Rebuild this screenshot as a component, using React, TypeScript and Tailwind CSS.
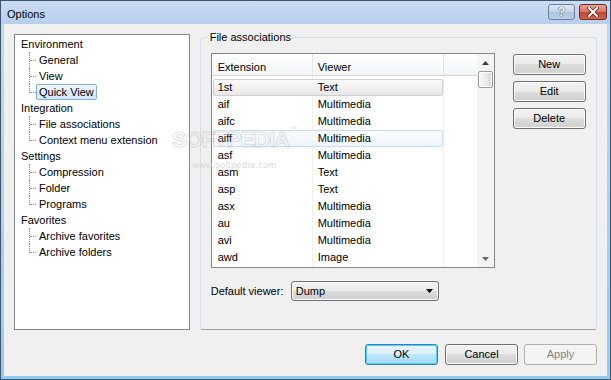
import React from "react";

const tree = [
  { label: "Environment", children: ["General", "View", "Quick View"] },
  { label: "Integration", children: ["File associations", "Context menu extension"] },
  { label: "Settings", children: ["Compression", "Folder", "Programs"] },
  { label: "Favorites", children: ["Archive favorites", "Archive folders"] },
];

const files: [string, string][] = [
  ["1st", "Text"],
  ["aif", "Multimedia"],
  ["aifc", "Multimedia"],
  ["aiff", "Multimedia"],
  ["asf", "Multimedia"],
  ["asm", "Text"],
  ["asp", "Text"],
  ["asx", "Multimedia"],
  ["au", "Multimedia"],
  ["avi", "Multimedia"],
  ["awd", "Image"],
];

function Button({
  children,
  variant = "normal",
  className = "",
}: {
  children: React.ReactNode;
  variant?: "normal" | "default" | "disabled";
  className?: string;
}) {
  const look =
    variant === "default"
      ? "border-[#3c7fb1] bg-[linear-gradient(to_bottom,#eaf6fd_0%,#d9f0fc_50%,#bee6fd_50%,#a7d9f5_100%)] shadow-[inset_0_0_0_1px_#48d0f8]"
      : variant === "disabled"
        ? "border-[#adb2b5] bg-[#f4f4f4] text-[#838383]"
        : "border-[#707070] bg-[linear-gradient(to_bottom,#f2f2f2_0%,#ebebeb_50%,#dddddd_50%,#cfcfcf_100%)] shadow-[inset_0_0_0_1px_#fbfbfb]";
  return (
    <div
      className={`flex h-[21px] w-[73px] items-center justify-center rounded-[3px] border leading-[13px] ${look} ${className}`}
    >
      {children}
    </div>
  );
}

function TitleBar() {
  return (
    <div className="flex h-[23px] items-start bg-gradient-to-b from-[#cadcf2] to-[#b7cfec] pl-[6px] pr-[3px]">
      <span className="mt-[7px] text-[11px] leading-[13px] text-black">Options</span>
      <div className="ml-auto mt-[3px] flex gap-[4px]">
        <div className="flex h-[16px] w-[27px] items-center justify-center rounded-[3px] border border-[#6d7f98] bg-[linear-gradient(to_bottom,#dce7f5_0%,#c3d4ea_50%,#aec3df_50%,#bccfe8_100%)]">
          <span className="text-[12px] font-bold leading-[12px] text-white [text-shadow:0_0_1px_#2d3a4d,0_0_1px_#2d3a4d]">?</span>
        </div>
        <div className="flex h-[16px] w-[28px] items-center justify-center rounded-[3px] border border-[#6b2a24] bg-[linear-gradient(to_bottom,#e8a393_0%,#d47561_50%,#c0432e_50%,#d0654d_100%)]">
          <svg width="12" height="10" viewBox="0 0 12 10">
            <path d="M2 1 L10 9 M10 1 L2 9" stroke="#4a1c17" strokeWidth="3.4" strokeLinecap="square" />
            <path d="M2 1 L10 9 M10 1 L2 9" stroke="#ffffff" strokeWidth="2" strokeLinecap="square" />
          </svg>
        </div>
      </div>
    </div>
  );
}

function Tree() {
  return (
    <div className="h-[296px] w-[176px] border border-[#828790] bg-white pt-[1px]">
      {tree.map((group) => (
        <div key={group.label}>
          <div className="flex h-[16px] items-center pl-[6px] leading-[13px]">{group.label}</div>
          {group.children.map((child, i) => {
            const last = i === group.children.length - 1;
            const selected = child === "Quick View";
            return (
              <div key={child} className="flex h-[16px] items-center pl-[14px]">
                <div className="relative h-full w-[7px]">
                  <div
                    className={
                      last
                        ? "absolute left-0 top-0 h-[9px] border-l border-dotted border-[#8c8c8c]"
                        : "absolute left-0 top-0 h-full border-l border-dotted border-[#8c8c8c]"
                    }
                  />
                  <div className="absolute left-[1px] top-[8px] w-[6px] border-t border-dotted border-[#8c8c8c]" />
                </div>
                <span
                  className={
                    selected
                      ? "flex h-[16px] items-center rounded-[2px] border border-[#84acdd] bg-gradient-to-b from-[#eef6fe] to-[#d4e6fb] px-[2px] leading-[13px]"
                      : "flex h-[16px] items-center border border-transparent px-[2px] leading-[13px]"
                  }
                >
                  {child}
                </span>
              </div>
            );
          })}
        </div>
      ))}
    </div>
  );
}

function ScrollBar() {
  return (
    <div className="flex w-[17px] flex-col bg-[#f4f4f4]">
      <div className="flex h-[17px] items-center justify-center">
        <svg width="7" height="4" viewBox="0 0 7 4">
          <path d="M3.5 0 L7 4 L0 4 Z" fill="#3c3c3c" />
        </svg>
      </div>
      <div className="mx-[1px] h-[17px] rounded-[2px] border border-[#9b9b9b] bg-gradient-to-r from-[#f7f7f7] via-[#ececec] to-[#d6d6d6] shadow-[inset_0_0_0_1px_#ffffff]" />
      <div className="flex-1" />
      <div className="flex h-[17px] items-center justify-center">
        <svg width="7" height="4" viewBox="0 0 7 4">
          <path d="M0 0 L7 0 L3.5 4 Z" fill="#6a6a6a" />
        </svg>
      </div>
    </div>
  );
}

function ListView() {
  return (
    <div className="flex h-[215px] w-[284px] border border-[#828790] bg-white">
      <div className="flex flex-1 flex-col">
        <div className="flex h-[22px] border-b border-[#d5d5d5] bg-gradient-to-b from-white to-[#f4f5f7]">
          <div className="w-[101px] border-r border-[#e2e5e9] pl-[6px] pt-[7px] leading-[13px]">Extension</div>
          <div className="w-[131px] border-r border-[#e2e5e9] pl-[5px] pt-[7px] leading-[13px]">Viewer</div>
          <div className="flex-1" />
        </div>
        <div className="relative flex-1 pt-[3px]">
          <div className="absolute bottom-0 left-[100px] top-0 border-l border-[#f0f0f0]" />
          <div className="absolute bottom-0 left-[231px] top-0 border-l border-[#f0f0f0]" />
          {files.map(([ext, viewer]) => {
            const look =
              ext === "1st"
                ? "border-[#d0d0d0] bg-gradient-to-b from-[#fafafa] to-[#e8e8e8]"
                : ext === "aiff"
                  ? "border-[#c6def9] bg-gradient-to-b from-[#fbfcfe] to-[#eef5fd]"
                  : "border-transparent";
            return (
              <div
                key={ext}
                className={`relative ml-[1px] flex h-[17px] w-[230px] items-center rounded-[2px] border leading-[13px] ${look}`}
              >
                <div className="w-[99px] pl-[4px]">{ext}</div>
                <div className="pl-[5px]">{viewer}</div>
              </div>
            );
          })}
        </div>
      </div>
      <ScrollBar />
    </div>
  );
}

function GroupBox() {
  return (
    <div className="relative ml-[10px] mt-[3px] h-[293px] w-[398px] rounded-[3px] border border-[#d5dfe5] border-b-[#a0a0a0]">
      <span className="absolute -top-[7px] left-[7px] bg-[#f0f0f0] px-[2px] leading-[13px]">File associations</span>
      <div className="flex">
        <div className="ml-[10px] mt-[15px] flex flex-col">
          <ListView />
          <div className="mt-[13px] flex items-center">
            <span className="w-[80px] leading-[13px]">Default viewer:</span>
            <div className="flex h-[20px] w-[148px] items-center rounded-[3px] border border-[#707070] bg-[linear-gradient(to_bottom,#f2f2f2_0%,#ebebeb_50%,#dddddd_50%,#cfcfcf_100%)] pl-[4px] pr-[5px] shadow-[inset_0_0_0_1px_#fbfbfb]">
              <span className="leading-[13px]">Dump</span>
              <svg className="ml-auto" width="7" height="4" viewBox="0 0 7 4">
                <path d="M0 0 L7 0 L3.5 4 Z" fill="#000000" />
              </svg>
            </div>
          </div>
        </div>
        <div className="ml-[18px] mt-[16px] flex flex-col gap-[6px]">
          <Button>New</Button>
          <Button>Edit</Button>
          <Button>Delete</Button>
        </div>
      </div>
    </div>
  );
}

export default function App() {
  return (
    <div className="relative h-[380px] w-[611px] border border-[#3d556f] bg-gradient-to-b from-[#c6d9f1] to-[#8fcdef] font-['Liberation_Sans',Arial,sans-serif] text-[11px] text-black">
      <TitleBar />
      <div className="mx-[3px] flex h-[352px] w-[603px] flex-col bg-[#f0f0f0]">
        <div className="flex px-[10px] pt-[10px]">
          <Tree />
          <GroupBox />
        </div>
        <div className="mt-[14px] flex justify-end pr-[10px]">
          <Button variant="default">OK</Button>
          <Button className="ml-[7px]">Cancel</Button>
          <Button variant="disabled" className="ml-[6px]">Apply</Button>
        </div>
      </div>

      {/* watermark */}
      <div className="pointer-events-none absolute left-[171px] top-[128px] text-[22px] font-bold leading-[22px] tracking-[-1px] text-transparent [-webkit-text-stroke:1px_rgba(180,180,180,0.4)]">
        SOFTPEDIA
      </div>
      <div className="pointer-events-none absolute left-[289px] top-[124px] text-[7px] leading-[8px] text-[#e0e0e0]">™</div>
      <div className="pointer-events-none absolute left-[191px] top-[159px] text-[9px] leading-[10px] tracking-[0.4px] text-[#dadada]">
        www.softpedia.com
      </div>
    </div>
  );
}
